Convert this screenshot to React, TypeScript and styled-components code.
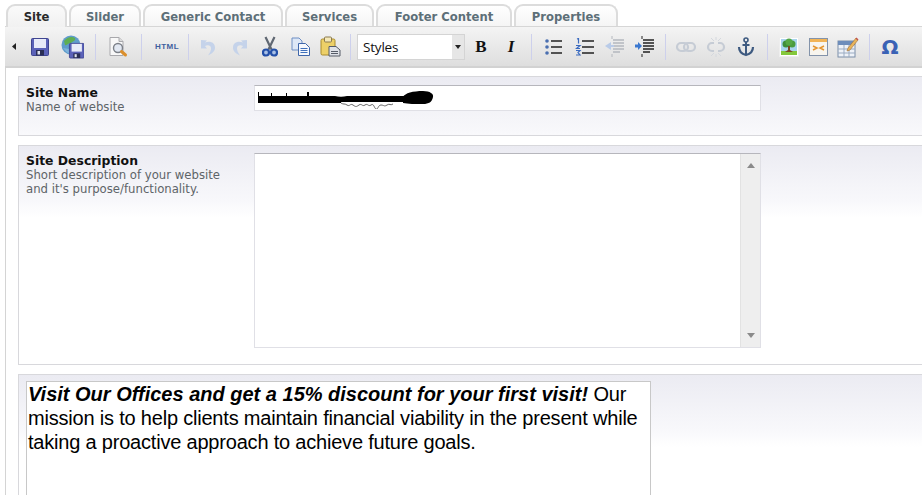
import React from 'react';
import styled, { createGlobalStyle } from 'styled-components';

const GlobalStyle = createGlobalStyle`
  html, body {
    margin: 0;
    padding: 0;
    background: #fff;
    overflow: hidden;
  }
`;

const Page = styled.div`
  width: 922px;
  height: 495px;
  overflow: hidden;
  font-family: "DejaVu Sans", sans-serif;
`;

const TabBar = styled.div`
  display: flex;
  gap: 2px;
  height: 22px;
  margin-top: 4px;
  padding-left: 6px;
`;

const Tab = styled.div<{ $w: number; $active?: boolean }>`
  width: ${(p) => p.$w}px;
  box-sizing: border-box;
  height: ${(p) => (p.$active ? 23 : 22)}px;
  position: relative;
  z-index: ${(p) => (p.$active ? 2 : 0)};
  border: 2px solid #dcdcdc;
  border-bottom: none;
  border-radius: 9px 9px 0 0;
  background: ${(p) => (p.$active ? 'linear-gradient(#fafafa, #f1f1f1)' : 'linear-gradient(#fff, #f5f5f5)')};
  color: ${(p) => (p.$active ? '#2b2b2b' : '#5d6f78')};
  font-size: 11.6px;
  font-weight: bold;
  line-height: 22px;
  text-align: center;
`;

const Toolbar = styled.div`
  display: flex;
  align-items: center;
  height: 42px;
  margin-left: 5px;
  box-sizing: border-box;
  border-top: 1px solid #d6d6d6;
  border-bottom: 2px solid #d2d2d2;
  background: linear-gradient(#f4f4f4, #dedede);
`;

const ToolButton = styled.div<{ $w: number }>`
  width: ${(p) => p.$w}px;
  flex: none;
  display: flex;
  justify-content: center;
  align-items: center;
`;

const Separator = styled.div<{ $w: number }>`
  width: ${(p) => p.$w}px;
  flex: none;
  height: 26px;
  display: flex;
  justify-content: center;
  &::before {
    content: '';
    width: 1px;
    background: #cdd0ec;
  }
`;

const StyleSelect = styled.div`
  width: 108px;
  height: 26px;
  flex: none;
  display: flex;
  box-sizing: border-box;
  border: 1px solid #d4d4d4;
`;

const StyleValue = styled.div`
  flex: 1;
  background: #fff;
  font-family: "Open Sans", sans-serif;
  font-size: 13.5px;
  letter-spacing: -0.2px;
  line-height: 25px;
  padding-left: 5px;
  color: #111;
`;

const StyleArrow = styled.div`
  width: 12px;
  background: #e6e6e6;
  display: flex;
  align-items: center;
  justify-content: center;
  &::before {
    content: '';
    border: 3.5px solid transparent;
    border-top: 4px solid #222;
    border-bottom: none;
  }
`;

const Body = styled.div`
  margin-left: 5px;
  height: 427px;
  box-sizing: border-box;
  border-left: 1px solid #d4d4d4;
  padding: 8px 0 0 12px;
  display: flex;
  flex-direction: column;
  gap: 9px;
`;

const Row = styled.div<{ $h: number; $top?: number }>`
  height: ${(p) => p.$h}px;
  flex: none;
  box-sizing: border-box;
  width: 920px;
  display: flex;
  border-top: 1px solid #d8d8dc;
  border-bottom: 1px solid #d8d8dc;
  border-left: 1px solid #d8d8dc;
  background: linear-gradient(#ebebf2, #f8f8fb 55px, #fff 72px);
  padding: ${(p) => p.$top ?? 7}px 0 0 7px;
`;

const LabelCol = styled.div`
  width: 228px;
  flex: none;
`;

const FieldTitle = styled.div`
  font-size: 12.4px;
  font-weight: bold;
  line-height: 15px;
  color: #111;
  margin-top: 1px;
`;

const FieldHint = styled.div`
  font-size: 11.7px;
  line-height: 14px;
  color: #5e6468;
`;

const TextInput = styled.div`
  position: relative;
  width: 507px;
  height: 26px;
  margin-top: 1px;
  box-sizing: border-box;
  background: #fff;
  border: 1px solid #e0e0e6;
  border-top-color: #b6b6bc;
`;

const Scribble = styled.svg`
  position: absolute;
  left: 2px;
  top: 3px;
`;

const TextArea = styled.div`
  width: 507px;
  height: 195px;
  margin-top: 1px;
  display: flex;
  box-sizing: border-box;
  background: #fff;
  border: 1px solid #e0e0e6;
  border-top-color: #b6b6bc;
`;

const AreaInner = styled.div`
  flex: 1;
`;

const ScrollBar = styled.div`
  width: 19px;
  display: flex;
  flex-direction: column;
  justify-content: space-between;
  align-items: center;
  padding: 9px 0;
  background: #eeeeee;
  border-left: 1px solid #e2e2e2;
`;

const ScrollArrow = styled.div<{ $down?: boolean }>`
  border: 4.5px solid transparent;
  border-bottom: ${(p) => (p.$down ? 'none' : '5px solid #8a8a8a')};
  border-top: ${(p) => (p.$down ? '5px solid #8a8a8a' : 'none')};
`;

const EditorRow = styled(Row)`
  border-bottom: none;
`;

const Editor = styled.div`
  width: 625px;
  height: 130px;
  box-sizing: border-box;
  background: #fff;
  border: 1px solid #c8c8c8;
  padding: 0 1px;
  font-family: "Liberation Sans", Arial, sans-serif;
  font-size: 20px;
  line-height: 24px;
  letter-spacing: -0.2px;
  color: #000;
`;

const Lead = styled.b`
  font-style: italic;
  letter-spacing: 0;
`;

const tabs = [
  { label: 'Site', w: 61, active: true },
  { label: 'Slider', w: 72 },
  { label: 'Generic Contact', w: 140 },
  { label: 'Services', w: 89 },
  { label: 'Footer Content', w: 136 },
  { label: 'Properties', w: 104 },
];

const Icon = ({ children, w = 20, h = 20 }: { children: React.ReactNode; w?: number; h?: number }) => (
  <svg width={w} height={h} viewBox={`0 0 ${w} ${h}`}>
    {children}
  </svg>
);

const Floppy = () => (
  <>
    <rect x="0.5" y="0.5" width="17" height="17" rx="1" fill="#5b62b8" stroke="#3f4590" />
    <rect x="3" y="1" width="12" height="9" fill="#e8ebf8" />
    <rect x="5" y="12" width="8" height="5.5" fill="#2a2e55" />
    <rect x="6.5" y="13" width="2.5" height="3.5" fill="#dfe3ef" />
  </>
);

const SaveIcon = () => (
  <Icon w={18} h={18}>
    <Floppy />
  </Icon>
);

const SaveWebIcon = () => (
  <Icon w={23} h={24}>
    <circle cx="10" cy="10" r="9.5" fill="#5f9ccb" />
    <path d="M3 6c3-4 8-5 11-3 1 3-2 3-4 5-3 0-4 3-6 2z" fill="#5fae52" />
    <path d="M2 13c2 2 4 5 7 6l-1-5z" fill="#7fb4dc" />
    <g transform="translate(8 8)">
      <g transform="scale(.86)">
        <Floppy />
      </g>
    </g>
  </Icon>
);

const PreviewIcon = () => (
  <Icon w={20} h={22}>
    <path d="M2 1.5h9l4 4v14H2z" fill="#f8f8f8" stroke="#a8a8ac" />
    <path d="M11 1.5v4h4" fill="#dcdcdc" stroke="#a8a8ac" />
    <circle cx="10" cy="12" r="4.5" fill="#e2e8f2" stroke="#7c8088" strokeWidth="1.4" />
    <path d="M13.5 15.5l4 3.5" stroke="#db8f2c" strokeWidth="3" strokeLinecap="round" />
  </Icon>
);

const HtmlIcon = styled.span`
  font-family: "Liberation Sans", sans-serif;
  font-size: 8px;
  font-weight: bold;
  letter-spacing: 0.5px;
  color: #3f5f9e;
`;

const UndoIcon = ({ flip }: { flip?: boolean }) => (
  <Icon w={16} h={19}>
    <g transform={flip ? 'translate(16 0) scale(-1 1)' : undefined}>
      <path d="M1 3l6 .5-2 2c5-2 10 0 10 5 0 4-3 6-7 8 2-3 3-5 3-7 0-3-3-4-6-2.500l2 2.500H1z" fill="#c5d3ea" />
    </g>
  </Icon>
);

const CutIcon = () => (
  <Icon w={16} h={21}>
    <path d="M3.500 1l6 12.500M12.500 1l-6 12.500" stroke="#5f6772" strokeWidth="2.200" />
    <circle cx="4" cy="16.500" r="3" fill="#a9c0e6" stroke="#2450a8" strokeWidth="2.200" />
    <circle cx="12" cy="16.500" r="3" fill="#a9c0e6" stroke="#2450a8" strokeWidth="2.200" />
  </Icon>
);

const CopyIcon = () => (
  <Icon w={20} h={19}>
    <path d="M1 1h7l3 3v9H1z" fill="#dde7f6" stroke="#6f8fc4" />
    <path d="M7.500 6.500h7l4 4v8h-11z" fill="#f5f8fd" stroke="#3f66aa" />
    <path d="M9.500 11.500h7M9.500 13.500h7M9.500 15.500h7" stroke="#3f70bb" />
  </Icon>
);

const PasteIcon = () => (
  <Icon w={21} h={21}>
    <rect x="1" y="3" width="14" height="16" rx="1.500" fill="#edd068" stroke="#a88a2c" />
    <rect x="4.500" y="1" width="7" height="5" rx="1" fill="#f4e8b8" stroke="#8a7a50" />
    <path d="M9 10.500h7l4 3.500v6H9z" fill="#dfe2e8" stroke="#565c68" />
    <path d="M11 15.500h7M11 17.500h7" stroke="#565c68" />
  </Icon>
);

const BoldIcon = styled.span`
  font-family: "Liberation Serif", serif;
  font-size: 17px;
  font-weight: bold;
  color: #111;
`;

const ItalicIcon = styled(BoldIcon)`
  font-style: italic;
`;

const BulletIcon = () => (
  <Icon w={17} h={18}>
    <circle cx="2" cy="3" r="1.800" fill="#4a6fb0" />
    <circle cx="2" cy="9" r="1.800" fill="#4a6fb0" />
    <circle cx="2" cy="15" r="1.800" fill="#4a6fb0" />
    <path d="M6 3h11M6 9h11M6 15h11" stroke="#222" strokeWidth="1.400" />
  </Icon>
);

const NumberIcon = () => (
  <Icon w={19} h={18}>
    <path d="M2 1l1.500-.5v5M1 7.500h4l-3.500 3h3.500M1 12.500h4l-2 2 2 2.500H1" stroke="#3b6bc0" strokeWidth="1.200" fill="none" />
    <path d="M7 3h12M7 9h12M7 15h12" stroke="#222" strokeWidth="1.400" />
  </Icon>
);

const IndentLines = ({ colour, arrow, flip }: { colour: string; arrow: string; flip?: boolean }) => (
  <Icon w={21} h={21}>
    <path d="M9 4h11M9 7h11M9 10h11M9 13h11M9 16h7" stroke={colour} strokeWidth="1.400" />
    <path d="M8 0v3M8 18v3" stroke={colour} />
    <path d={flip ? 'M7 6L1 10l6 4zM7 9h3v2H7' : 'M1 8.500h3V6l4 4-4 4v-2.500H1z'} fill={arrow} />
  </Icon>
);

const LinkIcon = () => (
  <Icon w={20} h={12}>
    <rect x="1" y="2" width="11" height="8" rx="4" fill="none" stroke="#c6ccd5" strokeWidth="2.200" />
    <rect x="8" y="2" width="11" height="8" rx="4" fill="none" stroke="#c6ccd5" strokeWidth="2.200" />
  </Icon>
);

const UnlinkIcon = () => (
  <Icon w={20} h={20}>
    <path d="M8 6H6a4 4 0 000 8h2M12 6h2a4 4 0 010 8h-2" fill="none" stroke="#c6ccd5" strokeWidth="2.200" />
    <path d="M5 1l3 3M15 1l-3 3M5 19l3-3M15 19l-3-3M10 0v3M10 17v3" stroke="#d4d8de" />
  </Icon>
);

const AnchorIcon = () => (
  <Icon w={18} h={20}>
    <circle cx="9" cy="3" r="2" fill="none" stroke="#3e5a80" strokeWidth="1.600" />
    <path d="M9 5v13M5.500 8h7" stroke="#3e5a80" strokeWidth="2" />
    <path d="M2 10c0 5 3 7 7 8 4-1 7-3 7-8" fill="none" stroke="#3e5a80" strokeWidth="2.200" />
  </Icon>
);

const ImageIcon = () => (
  <Icon>
    <rect x="0.500" y="0.500" width="19" height="19" fill="#fff" stroke="#eeeeee" />
    <rect x="2" y="2" width="16" height="16" fill="#a8d4ee" />
    <rect x="2" y="14" width="16" height="4" fill="#84c83c" />
    <circle cx="7" cy="7" r="3.500" fill="#3f8f3a" />
    <circle cx="13" cy="7" r="3.500" fill="#4b9c3f" />
    <circle cx="10" cy="5" r="3.500" fill="#56a845" />
    <path d="M9 9h2v4l3 2H6l3-2z" fill="#7a4a24" />
  </Icon>
);

const FlashIcon = () => (
  <Icon w={19} h={18}>
    <rect x="0.500" y="0.500" width="18" height="17" fill="#f8f5ee" stroke="#8393aa" />
    <rect x="1" y="1" width="17" height="3" fill="#f2b456" />
    <path d="M4 8l4 2-4 2M15 8l-4 2 4 2" fill="none" stroke="#e5962f" strokeWidth="1.500" />
  </Icon>
);

const TableEditIcon = () => (
  <Icon w={22} h={22}>
    <rect x="1" y="5" width="17" height="16" fill="#eef2f8" stroke="#7b8ea8" />
    <rect x="1" y="5" width="17" height="4" fill="#6d8dbb" />
    <path d="M7 9v12M12 9v12M1 13h17M1 17h17" stroke="#9aabc2" />
    <path d="M11 12l8-10 2 2-8 10-3 1z" fill="#e8b45a" stroke="#a0703a" strokeWidth=".600" />
    <path d="M18.500 2.500l1-1 2 2-1 1z" fill="#c0504d" />
  </Icon>
);

const OmegaIcon = styled.span`
  font-family: "DejaVu Sans", sans-serif;
  font-size: 20px;
  font-weight: bold;
  color: #3a62b5;
`;

export default function App() {
  return (
    <Page>
      <GlobalStyle />
      <TabBar>
        {tabs.map((t) => (
          <Tab key={t.label} $w={t.w} $active={t.active}>
            {t.label}
          </Tab>
        ))}
      </TabBar>
      <Toolbar>
        <ToolButton $w={18}>
          <svg width="4" height="7" viewBox="0 0 4 7">
            <path d="M4 0v7L0 3.500z" fill="#222" />
          </svg>
        </ToolButton>
        <ToolButton $w={34}><SaveIcon /></ToolButton>
        <ToolButton $w={30}><SaveWebIcon /></ToolButton>
        <Separator $w={16} />
        <ToolButton $w={30}><PreviewIcon /></ToolButton>
        <Separator $w={16} />
        <ToolButton $w={36}><HtmlIcon>HTML</HtmlIcon></ToolButton>
        <Separator $w={6} />
        <ToolButton $w={34}><UndoIcon /></ToolButton>
        <ToolButton $w={30}><UndoIcon flip /></ToolButton>
        <ToolButton $w={30}><CutIcon /></ToolButton>
        <ToolButton $w={32}><CopyIcon /></ToolButton>
        <ToolButton $w={26}><PasteIcon /></ToolButton>
        <Separator $w={14} />
        <StyleSelect>
          <StyleValue>Styles</StyleValue>
          <StyleArrow />
        </StyleSelect>
        <ToolButton $w={32}><BoldIcon>B</BoldIcon></ToolButton>
        <ToolButton $w={28}><ItalicIcon>I</ItalicIcon></ToolButton>
        <Separator $w={12} />
        <ToolButton $w={32}><BulletIcon /></ToolButton>
        <ToolButton $w={30}><NumberIcon /></ToolButton>
        <ToolButton $w={30}><IndentLines colour="#b4b8be" arrow="#b9cbe8" flip /></ToolButton>
        <ToolButton $w={30}><IndentLines colour="#222" arrow="#3b78d0" /></ToolButton>
        <Separator $w={12} />
        <ToolButton $w={30}><LinkIcon /></ToolButton>
        <ToolButton $w={30}><UnlinkIcon /></ToolButton>
        <ToolButton $w={30}><AnchorIcon /></ToolButton>
        <Separator $w={12} />
        <ToolButton $w={32}><ImageIcon /></ToolButton>
        <ToolButton $w={26}><FlashIcon /></ToolButton>
        <ToolButton $w={34}><TableEditIcon /></ToolButton>
        <Separator $w={8} />
        <ToolButton $w={34}><OmegaIcon>Ω</OmegaIcon></ToolButton>
      </Toolbar>
      <Body>
        <Row $h={60}>
          <LabelCol>
            <FieldTitle>Site Name</FieldTitle>
            <FieldHint>Name of website</FieldHint>
          </LabelCol>
          <TextInput>
            <Scribble width="180" height="20" viewBox="0 0 180 20">
              <path d="M1 3h1v4h12V4h1v3h14V4h1v3h20V3h2v4h26c4 1 8 1 12 0h68v6H84v1H1z" fill="#000" />
              <path d="M84 14c3 2 3 0 6 2s3-2 6 0 3 2 6 0 3 2 6 0 3 2 6 0 3 3 5 4 2-4 5-4 3 2 6 0 3 1 6-1" fill="none" stroke="#666" />
              <path d="M146 8c2-4 10-6 20-6 7 0 11 3 10 6-1 5-4 7-10 7-8 0-15 0-20-1z" fill="#000" />
            </Scribble>
          </TextInput>
        </Row>
        <Row $h={220} $top={6}>
          <LabelCol>
            <FieldTitle>Site Description</FieldTitle>
            <FieldHint>
              Short description of your website
              <br />
              and it's purpose/functionality.
            </FieldHint>
          </LabelCol>
          <TextArea>
            <AreaInner />
            <ScrollBar>
              <ScrollArrow />
              <ScrollArrow $down />
            </ScrollBar>
          </TextArea>
        </Row>
        <EditorRow $h={121} $top={6}>
          <Editor>
            <Lead>Visit Our Offices and get a 15% discount for your first visit!</Lead> Our
            <br />
            mission is to help clients maintain financial viability in the present while
            <br />
            taking a proactive approach to achieve future goals.
          </Editor>
        </EditorRow>
      </Body>
    </Page>
  );
}
